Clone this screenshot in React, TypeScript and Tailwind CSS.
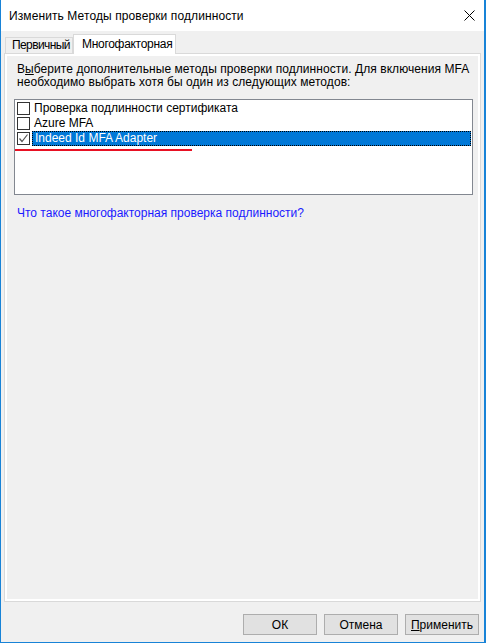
import React from 'react';

const font = { fontFamily: '"Liberation Sans", Arial, sans-serif' };

type Item = { label: string; checked: boolean; selected?: boolean };

const ITEMS: Item[] = [
  { label: 'Проверка подлинности сертификата', checked: false },
  { label: 'Azure MFA', checked: false },
  { label: 'Indeed Id MFA Adapter', checked: true, selected: true },
];

const CheckBox: React.FC<{ checked: boolean }> = ({ checked }) => (
  <div className="w-[13px] h-[13px] border border-[#333333] bg-white flex items-center justify-center shrink-0">
    {checked && (
      <svg width="11" height="11" viewBox="0 0 11 11">
        <path d="M1.5 5.5 L4 8.5 L9.5 1.5" fill="none" stroke="#555555" strokeWidth="1.2" />
      </svg>
    )}
  </div>
);

const Button: React.FC<{ children: React.ReactNode }> = ({ children }) => (
  <button className="w-[74px] h-[21px] bg-[#e1e1e1] border border-[#adadad] text-[12px] text-black flex items-center justify-center">
    {children}
  </button>
);

const App: React.FC = () => {
  return (
    <div
      className="w-[486px] h-[643px] bg-[#f0f0f0] border-l border-r-2 border-b border-[#1883d7] flex flex-col text-black text-[12px]"
      style={font}
    >
      {/* title bar */}
      <div className="h-[31px] bg-white flex items-center justify-between pl-[8px] pr-[9px] shrink-0">
        <span className="text-[12px] tracking-[0.1px]">Изменить Методы проверки подлинности</span>
        <svg width="11" height="11" viewBox="0 0 11 11">
          <path d="M0.5 0.5 L10.5 10.5 M10.5 0.5 L0.5 10.5" stroke="#000" strokeWidth="1" />
        </svg>
      </div>

      {/* tabs */}
      <div className="h-[22px] flex items-end pl-[4px] shrink-0">
        <div className="w-[68px] h-[16px] border border-b-0 border-[#d9d9d9] bg-[#f0f0f0] pl-[6px] leading-[15px] tracking-[-0.6px] whitespace-nowrap overflow-hidden">
          Первичный
        </div>
        <div className="relative z-10 -mb-px w-[103px] h-[20px] border border-b-0 border-[#d9d9d9] bg-white pl-[8px] leading-[18px] tracking-[-0.3px] whitespace-nowrap">
          Многофакторная
        </div>
      </div>

      {/* tab page */}
      <div className="mx-[3px] flex-1 border border-[#d9d9d9] bg-white p-[2px] flex">
        <div className="flex-1 bg-[#f0f0f0] flex flex-col">
          <div className="pl-[10px] pt-[7px] leading-[13px] tracking-[0.07px]">
            <div>
              В<span className="underline">ы</span>берите дополнительные методы проверки подлинности. Для включения MFA
            </div>
            <div>необходимо выбрать хотя бы один из следующих методов:</div>
          </div>

          <div className="relative ml-[7px] mt-[10px] w-[459px] h-[96px] border border-[#828790] bg-white pt-[1px] pl-[2px] pr-[1px]">
            {ITEMS.map(item => (
              <div key={item.label} className="h-[15px] flex items-center">
                <CheckBox checked={item.checked} />
                {item.selected ? (
                  <div className="ml-[2px] flex-1 h-[15px] bg-[#0078d7] text-white pl-[2px] leading-[13px] border border-dotted border-[#000000]">
                    {item.label}
                  </div>
                ) : (
                  <div className="ml-[4px] leading-[15px]">{item.label}</div>
                )}
              </div>
            ))}
            {/* red annotation underline */}
            <div className="absolute left-0 top-[49px] w-[177px] h-[2px] bg-[#e81123]" />
          </div>

          <div className="pl-[10px] mt-[12px] leading-[13px] text-[#1a1aff]">
            Что такое многофакторная проверка подлинности?
          </div>
        </div>
      </div>

      {/* buttons */}
      <div className="h-[40px] flex items-start justify-end gap-[7px] pt-[12px] pr-[5px] shrink-0">
        <Button>ОК</Button>
        <Button>Отмена</Button>
        <Button>
          <span className="underline">П</span>рименить
        </Button>
      </div>
    </div>
  );
};

export default App;
